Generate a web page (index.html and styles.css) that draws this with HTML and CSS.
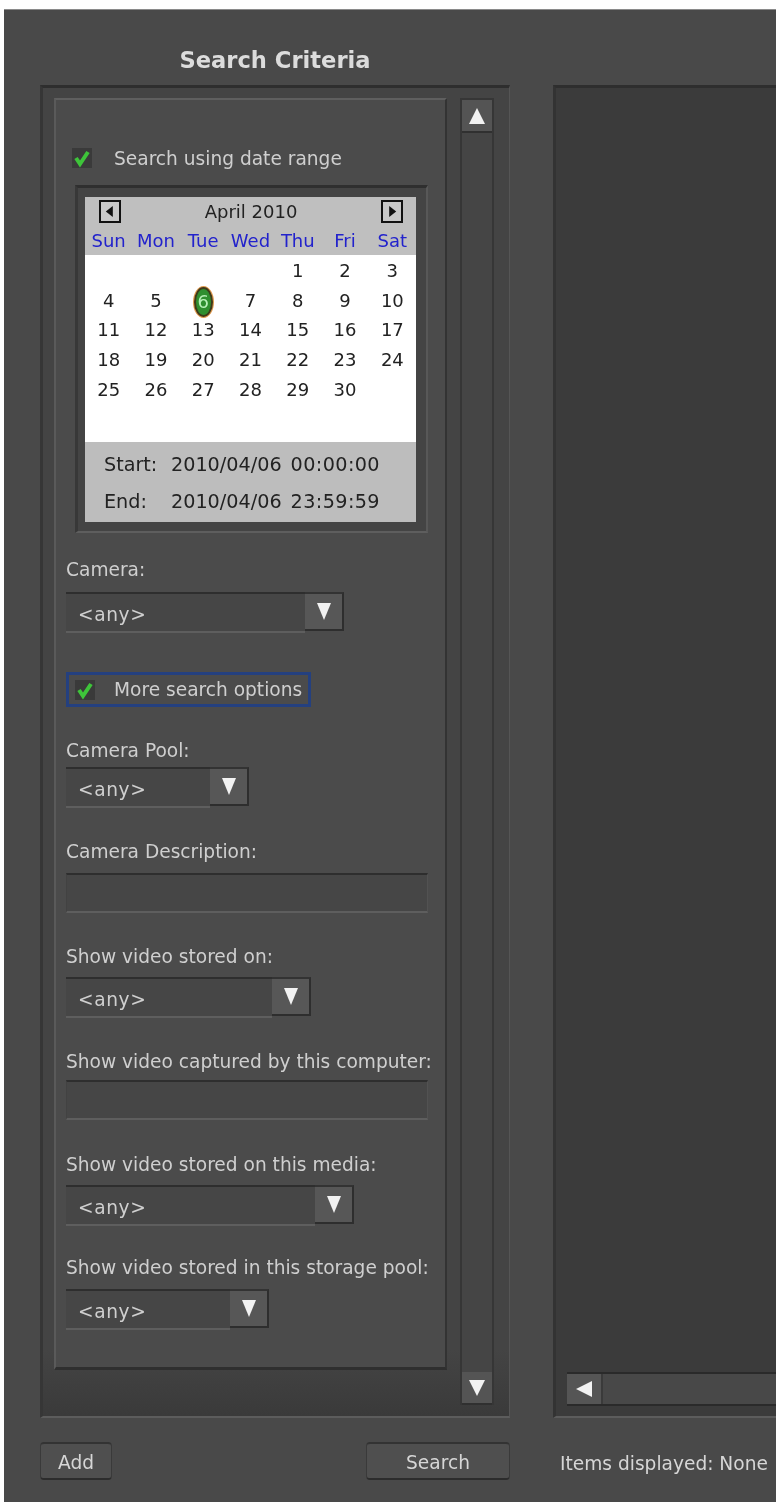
FILE: index.html
```html
<!DOCTYPE html>
<html lang="en">
<head>
    <meta charset="UTF-8">
    <meta name="viewport" content="width=device-width, initial-scale=1.0">
    <title>Search Criteria</title>
    <link rel="stylesheet" href="styles.css">
</head>
<body>
    <div class="window">
        <div class="title-row">
            <h2 class="title">Search Criteria</h2>
        </div>
        <div class="spacer"></div>
        <div class="spacer"></div>

        <div class="left-panel">
            <div class="form-panel">
                <div class="check-row date-check">
                    <svg class="check" viewBox="0 0 20 20"><rect width="20" height="20" fill="#3a3a3a"/><path d="M4 10l4 6L16 4" fill="none" stroke="#3ec43a" stroke-width="4"/></svg>
                    <span>Search using date range</span>
                </div>

                <div class="calendar-frame">
                    <div class="calendar">
                        <div class="cal-head">
                            <div class="month-row">
                                <button class="nav-btn"><svg viewBox="0 0 10 10"><polygon points="7,1 2,5 7,9" fill="#111"/></svg></button>
                                <span>April 2010</span>
                                <button class="nav-btn"><svg viewBox="0 0 10 10"><polygon points="3,1 8,5 3,9" fill="#111"/></svg></button>
                            </div>
                            <div class="cal-grid weekdays">
                                <span>Sun</span><span>Mon</span><span>Tue</span><span>Wed</span><span>Thu</span><span>Fri</span><span>Sat</span>
                            </div>
                        </div>
                        <div class="cal-grid days">
                            <span></span><span></span><span></span><span></span><span>1</span><span>2</span><span>3</span>
                            <span>4</span><span>5</span><span><b class="today">6</b></span><span>7</span><span>8</span><span>9</span><span>10</span>
                            <span>11</span><span>12</span><span>13</span><span>14</span><span>15</span><span>16</span><span>17</span>
                            <span>18</span><span>19</span><span>20</span><span>21</span><span>22</span><span>23</span><span>24</span>
                            <span>25</span><span>26</span><span>27</span><span>28</span><span>29</span><span>30</span><span></span>
                        </div>
                        <div class="cal-foot">
                            <div class="range-row"><span class="range-label">Start:</span><span>2010/04/06</span><span class="range-time">00:00:00</span></div>
                            <div class="range-row"><span class="range-label">End:</span><span>2010/04/06</span><span class="range-time">23:59:59</span></div>
                        </div>
                    </div>
                </div>

                <div class="field camera-field">
                    <label>Camera:</label>
                    <div class="combo combo-camera">
                        <span class="combo-value">&lt;any&gt;</span>
                        <span class="combo-btn"><svg viewBox="0 0 14 17"><polygon points="0,0 14,0 7,17" fill="#f2f2f2"/></svg></span>
                    </div>
                </div>

                <div class="check-row more-check">
                    <svg class="check" viewBox="0 0 20 20"><rect width="20" height="20" fill="#3a3a3a"/><path d="M4 10l4 6L16 4" fill="none" stroke="#3ec43a" stroke-width="4"/></svg>
                    <span>More search options</span>
                </div>

                <div class="field pool-field">
                    <label>Camera Pool:</label>
                    <div class="combo combo-pool">
                        <span class="combo-value">&lt;any&gt;</span>
                        <span class="combo-btn"><svg viewBox="0 0 14 17"><polygon points="0,0 14,0 7,17" fill="#f2f2f2"/></svg></span>
                    </div>
                </div>

                <div class="field desc-field">
                    <label>Camera Description:</label>
                    <div class="text-input"></div>
                </div>

                <div class="field">
                    <label>Show video stored on:</label>
                    <div class="combo combo-stored">
                        <span class="combo-value">&lt;any&gt;</span>
                        <span class="combo-btn"><svg viewBox="0 0 14 17"><polygon points="0,0 14,0 7,17" fill="#f2f2f2"/></svg></span>
                    </div>
                </div>

                <div class="field captured-field">
                    <label>Show video captured by this computer:</label>
                    <div class="text-input"></div>
                </div>

                <div class="field media-field">
                    <label>Show video stored on this media:</label>
                    <div class="combo combo-media">
                        <span class="combo-value">&lt;any&gt;</span>
                        <span class="combo-btn"><svg viewBox="0 0 14 17"><polygon points="0,0 14,0 7,17" fill="#f2f2f2"/></svg></span>
                    </div>
                </div>

                <div class="field storage-field">
                    <label>Show video stored in this storage pool:</label>
                    <div class="combo combo-storage">
                        <span class="combo-value">&lt;any&gt;</span>
                        <span class="combo-btn"><svg viewBox="0 0 14 17"><polygon points="0,0 14,0 7,17" fill="#f2f2f2"/></svg></span>
                    </div>
                </div>
            </div>

            <div class="vscroll">
                <span class="scroll-btn"><svg viewBox="0 0 16 16"><polygon points="8,0 16,16 0,16" fill="#f2f2f2"/></svg></span>
                <span class="scroll-btn"><svg viewBox="0 0 16 16"><polygon points="0,0 16,0 8,16" fill="#f2f2f2"/></svg></span>
            </div>
        </div>

        <div class="spacer"></div>

        <div class="right-panel">
            <div class="hscroll">
                <span class="hscroll-btn"><svg viewBox="0 0 16 16"><polygon points="16,0 16,16 0,8" fill="#f2f2f2"/></svg></span>
            </div>
        </div>

        <div class="actions">
            <button class="btn btn-add">Add</button>
            <button class="btn btn-search">Search</button>
        </div>
        <div class="spacer"></div>
        <div class="status">Items displayed: None</div>
    </div>
</body>
</html>
```

FILE: styles.css
```css
body {
    margin: 0;
    background: white;
    font-family: "DejaVu Sans", "Noto Sans", sans-serif;
    color: #d6d6d6;
    font-size: 18.6px;
}
.window {
    margin: 9px 0 1px 4px;
    height: 1493px;
    background: #494949;
    border-top: 1px solid #8a8a8a;
    box-sizing: border-box;
    display: grid;
    grid-template-columns: 506px 43px 1fr;
    grid-template-rows: 75px 1333px 1fr;
    overflow: hidden;
    filter: blur(0.7px);
}
.title-row {
    padding: 36px 0 12px 36px;
    display: flex;
    justify-content: center;
    align-items: center;
    box-sizing: border-box;
}
.title {
    margin: 0;
    font-size: 22.6px;
    font-weight: bold;
    color: #dcdcdc;
}

/* left side */
.left-panel {
    margin-left: 36px;
    background: linear-gradient(#444444, #444444 95%, #3a3a3a);
    border-top: 3px solid #2e2e2e;
    border-left: 3px solid #363636;
    border-bottom: 2px solid #5c5c5c;
    border-right: 1px solid #555555;
    box-sizing: border-box;
    padding: 10px 15px 0 11px;
    display: flex;
    gap: 13px;
    align-items: flex-start;
}
.form-panel {
    width: 394px;
    height: 1272px;
    box-sizing: border-box;
    background: #4b4b4b;
    border-top: 2px solid #5f5f5f;
    border-left: 2px solid #5a5a5a;
    border-bottom: 3px solid #2f2f2f;
    border-right: 2px solid #333333;
    padding: 0 0 0 10px;
}
.check-row {
    display: flex;
    align-items: center;
    gap: 22px;
    color: #cfcfcf;
}
.check {
    width: 20px;
    height: 20px;
    flex-shrink: 0;
}
.date-check {
    margin: 46px 0 0 6px;
    height: 24px;
}
.calendar-frame {
    margin: 15px 0 0 9px;
    width: 353px;
    height: 348px;
    box-sizing: border-box;
    padding: 9px 10px 8px 7px;
    background: #444444;
    border-top: 3px solid #2f2f2f;
    border-left: 3px solid #383838;
    border-bottom: 2px solid #5e5e5e;
    border-right: 2px solid #585858;
}
.calendar {
    width: 331px;
    height: 325px;
    background: white;
    color: #222222;
    display: flex;
    flex-direction: column;
    font-size: 18px;
}
.cal-head {
    height: 58px;
    background: #bfbfbf;
}
.month-row {
    height: 29px;
    display: flex;
    align-items: center;
    justify-content: space-between;
    padding: 0 13px 0 14px;
}
.nav-btn {
    width: 22px;
    height: 23px;
    padding: 2px;
    background: #c8c8c8;
    border: 2px solid #111111;
    box-sizing: border-box;
    display: flex;
}
.cal-grid {
    display: grid;
    grid-template-columns: repeat(7, 1fr);
    text-align: center;
}
.weekdays {
    height: 29px;
    line-height: 29px;
    color: #2222cc;
    white-space: nowrap;
}
.days {
    flex: 1;
    grid-auto-rows: 29.7px;
    line-height: 29.7px;
    padding-top: 1px;
}
.today {
    display: inline-block;
    width: 15px;
    height: 26px;
    line-height: 26px;
    border-radius: 50%;
    background: #2f8f2f;
    border: 2px solid #3f3a1a;
    box-shadow: 0 0 0 1px #e09a50;
    color: #b8f0b8;
    font-weight: normal;
    vertical-align: middle;
}
.cal-foot {
    height: 80px;
    box-sizing: border-box;
    background: #bdbdbd;
    padding: 4px 0 0 19px;
    font-size: 19.2px;
    white-space: nowrap;
}
.range-row {
    display: flex;
    height: 37px;
    align-items: center;
}
.range-label {
    width: 67px;
}
.range-time {
    margin-left: 9px;
    letter-spacing: 0.4px;
}

/* form fields */
.field {
    margin-top: 34px;
}
.field label {
    display: block;
    line-height: 20px;
    height: 20px;
    margin-bottom: 10px;
    color: #cfcfcf;
    white-space: nowrap;
}
.camera-field {
    margin-top: 27px;
}
.camera-field label {
    margin-bottom: 12px;
}
.pool-field label {
    margin-bottom: 6px;
}
.desc-field label,
.storage-field label {
    margin-bottom: 11px;
}
.captured-field label {
    margin-bottom: 8px;
}
.media-field {
    margin-top: 35px;
}
.storage-field {
    margin-top: 32px;
}
.combo {
    height: 41px;
    display: flex;
    box-sizing: border-box;
}
.combo-value {
    flex: 1;
    background: #464646;
    border-top: 2px solid #2e2e2e;
    border-bottom: 2px solid #5e5e5e;
    padding-left: 12px;
    line-height: 41px;
    letter-spacing: 0.6px;
    color: #cfcfcf;
}
.combo-btn {
    width: 39px;
    height: 39px;
    box-sizing: border-box;
    background: #575757;
    border-right: 2px solid #2e2e2e;
    border-bottom: 2px solid #2e2e2e;
    border-top: 2px solid #333333;
    display: flex;
    align-items: center;
    justify-content: center;
}
.combo-btn svg {
    width: 14px;
    height: 17px;
}
.combo-camera { width: 278px; }
.combo-pool { width: 183px; }
.combo-stored { width: 245px; }
.combo-media { width: 288px; }
.combo-storage { width: 203px; }
.text-input {
    width: 362px;
    height: 40px;
    box-sizing: border-box;
    background: #464646;
    border-top: 2px solid #2e2e2e;
    border-bottom: 2px solid #5e5e5e;
    border-left: 1px solid #424242;
    border-right: 1px solid #525252;
}
.more-check {
    margin-top: 39px;
    width: 245px;
    height: 35px;
    box-sizing: border-box;
    padding-left: 6px;
    gap: 19px;
    border: 3px solid #24407f;
    white-space: nowrap;
}

/* scrollbars */
.vscroll {
    width: 34px;
    height: 1307px;
    box-sizing: border-box;
    background: #454545;
    border-left: 2px solid #363636;
    border-right: 2px solid #363636;
    border-top: 2px solid #363636;
    display: flex;
    flex-direction: column;
    justify-content: space-between;
}
.scroll-btn {
    height: 33px;
    background: #545454;
    border-bottom: 2px solid #303030;
    box-sizing: border-box;
    display: flex;
    align-items: center;
    justify-content: center;
}
.scroll-btn svg {
    width: 16px;
    height: 16px;
}

/* right side */
.right-panel {
    background: #3b3b3b;
    border-top: 3px solid #2e2e2e;
    border-left: 3px solid #333333;
    border-bottom: 2px solid #5c5c5c;
    box-sizing: border-box;
    display: flex;
    align-items: flex-end;
    padding: 0 0 10px 11px;
}
.hscroll {
    flex: 1;
    height: 34px;
    box-sizing: border-box;
    background: #484848;
    border-top: 2px solid #2a2a2a;
    border-bottom: 2px solid #2a2a2a;
    display: flex;
}
.hscroll-btn {
    width: 36px;
    background: #555555;
    border-right: 2px solid #3a3a3a;
    box-sizing: border-box;
    display: flex;
    align-items: center;
    justify-content: center;
}
.hscroll-btn svg {
    width: 16px;
    height: 16px;
}

/* bottom row */
.actions {
    padding: 24px 0 0 36px;
    display: flex;
    justify-content: space-between;
    align-items: flex-start;
}
.btn {
    height: 38px;
    background: #4f4f4f;
    color: #d6d6d6;
    border: 1px solid #3a3a3a;
    border-top: 2px solid #333333;
    border-bottom: 2px solid #2c2c2c;
    border-radius: 4px;
    font-family: inherit;
    font-size: 18.6px;
    padding: 3px 0 0;
}
.btn-add {
    width: 72px;
}
.btn-search {
    width: 144px;
}
.status {
    padding: 35px 0 0 7px;
    white-space: nowrap;
    color: #d6d6d6;
}
```
